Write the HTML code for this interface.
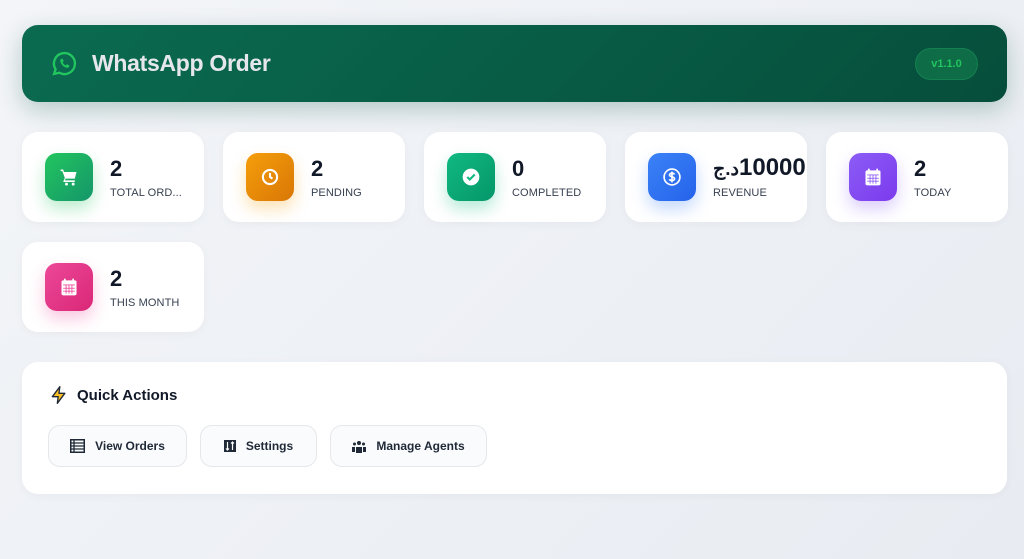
<!DOCTYPE html>
<html><head><meta charset="utf-8"><style>
*{box-sizing:border-box;margin:0;padding:0}
body{width:1024px;height:559px;overflow:hidden;background:linear-gradient(135deg,#f3f5f8,#e8ecf2);font-family:"Liberation Sans","Noto Sans CJK SC",sans-serif;position:relative}
.hdr{position:absolute;left:22px;top:25px;width:985px;height:77px;border-radius:16px;background:linear-gradient(135deg,#0a6b50,#064e3b);box-shadow:0 8px 24px rgba(6,78,59,.25)}
.hdr .t{position:absolute;left:70px;top:25px;color:#e5e7eb;font-size:23px;font-weight:bold;letter-spacing:-.3px}
.hdr svg{position:absolute;left:28px;top:25px}
.ver{position:absolute;left:893px;top:23px;width:63px;height:32px;border-radius:16px;background:#0e6d47;border:1px solid #14804f;color:#22c55e;font-size:11px;font-weight:bold;text-align:center;line-height:30px}
.card{position:absolute;width:182px;height:90px;background:#fff;border-radius:16px;box-shadow:0 2px 10px rgba(0,0,0,.04)}
.ic{position:absolute;left:23px;top:21px;width:48px;height:48px;border-radius:12px;display:flex;align-items:center;justify-content:center}
.num{position:absolute;left:88px;top:24px;font-size:22px;font-weight:bold;color:#111827}
.lbl{position:absolute;left:88px;top:55px;font-size:11px;color:#374151;letter-spacing:.1px}
.qa{position:absolute;left:22px;top:362px;width:985px;height:132px;background:#fff;border-radius:16px;box-shadow:0 2px 10px rgba(0,0,0,.04)}
.qa h3{position:absolute;left:55px;top:25px;font-size:15px;color:#111827}
.btn{position:absolute;top:63px;height:42px;border:1px solid #e5e7eb;border-radius:12px;background:#fafbfc;font-size:12px;font-weight:bold;color:#1f2937;display:flex;align-items:center;justify-content:center;gap:10px}
</style></head><body>
<div class="hdr">
<svg width="28" height="28" viewBox="0 0 24 24" fill="none" stroke="#22c55e" stroke-width="2"><path d="M3.5 20.5l1.3-4A9 9 0 1 1 8 19.5z"/><path d="M9 8.5c0 3.5 3 6.5 6.5 6.5l1-1.5-2-1-1 1c-1.2-.5-2.5-1.8-3-3l1-1-1-2z" fill="#22c55e" stroke-width="0.5"/></svg>
<div class="t">WhatsApp Order</div>
<div class="ver">v1.1.0</div>
</div>

<div class="card" style="left:22px;top:132px"><div class="ic" style="background:linear-gradient(135deg,#22c55e,#15966a);box-shadow:0 8px 16px rgba(34,197,94,.3)"><svg width="20" height="20" viewBox="0 0 24 24" fill="#fff"><path d="M2 3h3l1 3h15l-2 8H8l-1 2h12v2H5l2-5L4 5H2z"/><circle cx="9" cy="20.5" r="1.7"/><circle cx="17" cy="20.5" r="1.7"/></svg></div><div class="num">2</div><div class="lbl">TOTAL ORD...</div></div>
<div class="card" style="left:223px;top:132px"><div class="ic" style="background:linear-gradient(135deg,#f59e0b,#d97706);box-shadow:0 8px 16px rgba(245,158,11,.3)"><svg width="20" height="20" viewBox="0 0 24 24" fill="none" stroke="#fff" stroke-width="2.5"><circle cx="12" cy="12" r="8.5"/><path d="M12 7v5l3 2"/></svg></div><div class="num">2</div><div class="lbl">PENDING</div></div>
<div class="card" style="left:424px;top:132px"><div class="ic" style="background:linear-gradient(135deg,#10b981,#059669);box-shadow:0 8px 16px rgba(16,185,129,.3)"><svg width="20" height="20" viewBox="0 0 24 24"><circle cx="12" cy="12" r="10" fill="#fff"/><path d="M7.5 12l3 3 6-6" stroke="#10b981" stroke-width="2.5" fill="none"/></svg></div><div class="num">0</div><div class="lbl">COMPLETED</div></div>
<div class="card" style="left:625px;top:132px;overflow:hidden"><div class="ic" style="background:linear-gradient(135deg,#3b82f6,#2563eb);box-shadow:0 8px 16px rgba(59,130,246,.3)"><svg width="20" height="20" viewBox="0 0 24 24" fill="none" stroke="#fff" stroke-width="2"><circle cx="12" cy="12" r="9.5"/><path d="M15 9c-.5-1-1.5-1.5-3-1.5s-3 .8-3 2 1.2 1.8 3 2.3 3 1 3 2.3-1.5 2.2-3 2.2-2.7-.6-3.2-1.6M12 5.5v13"/></svg></div><div class="num" style="white-space:nowrap;top:22px;font-size:24px" dir="ltr"><bdi style="font-size:19px">د.ج</bdi><bdi>10000</bdi></div><div class="lbl">REVENUE</div></div>
<div class="card" style="left:826px;top:132px"><div class="ic" style="background:linear-gradient(135deg,#8b5cf6,#7c3aed);box-shadow:0 8px 16px rgba(139,92,246,.3)"><svg width="20" height="20" viewBox="0 0 24 24" fill="#fff"><rect x="3" y="4" width="18" height="18" rx="2"/><rect x="6" y="2" width="2" height="4"/><rect x="16" y="2" width="2" height="4"/><g fill="#8b5cf6"><rect x="5" y="9" width="14" height="1"/><rect x="8" y="9" width="1" height="11"/><rect x="11.5" y="9" width="1" height="11"/><rect x="15" y="9" width="1" height="11"/><rect x="5" y="13" width="14" height="1"/><rect x="5" y="16.5" width="14" height="1"/></g></svg></div><div class="num">2</div><div class="lbl">TODAY</div></div>
<div class="card" style="left:22px;top:242px"><div class="ic" style="background:linear-gradient(135deg,#ec4899,#db2777);box-shadow:0 8px 16px rgba(236,72,153,.3)"><svg width="20" height="20" viewBox="0 0 24 24" fill="#fff"><rect x="3" y="4" width="18" height="18" rx="2"/><rect x="6" y="2" width="2" height="4"/><rect x="16" y="2" width="2" height="4"/><g fill="#ec4899"><rect x="5" y="9" width="14" height="1"/><rect x="8" y="9" width="1" height="11"/><rect x="11.5" y="9" width="1" height="11"/><rect x="15" y="9" width="1" height="11"/><rect x="5" y="13" width="14" height="1"/><rect x="5" y="16.5" width="14" height="1"/></g></svg></div><div class="num">2</div><div class="lbl">THIS MONTH</div></div>

<div class="qa">
<svg style="position:absolute;left:27px;top:23px" width="20" height="20" viewBox="0 0 24 24" fill="none" stroke="#1f2937" stroke-width="1.6" stroke-linejoin="round"><path d="M13 2L4 14h7l-1 8 9-12h-7z" fill="#fbbf24"/></svg>
<h3>Quick Actions</h3>
<div class="btn" style="left:26px;width:139px"><svg width="15" height="14" viewBox="0 0 15 14"><rect x="0.75" y="0.75" width="13.5" height="12.5" fill="none" stroke="#1f2937" stroke-width="1.5"/><path d="M1 4h13M1 7h13M1 10h13M4 1v12" stroke="#1f2937" stroke-width="1.3"/></svg>View Orders</div>
<div class="btn" style="left:178px;width:117px"><svg width="12" height="12" viewBox="0 0 12 12"><rect width="12" height="12" fill="#1f2937"/><path d="M3.5 2v8M5 8.5 3.5 10 2 8.5M8.5 10V2M7 3.5 8.5 2 10 3.5" stroke="#fff" stroke-width="1.2" fill="none"/></svg>Settings</div>
<div class="btn" style="left:308px;width:157px"><svg width="14" height="13" viewBox="0 0 14 13" fill="#1f2937"><circle cx="7" cy="3" r="2"/><circle cx="2.5" cy="4" r="1.5"/><circle cx="11.5" cy="4" r="1.5"/><path d="M4 7h6v6H4zM0 7h3v5H0zM11 7h3v5h-3z"/></svg>Manage Agents</div>
</div>
</body></html>
